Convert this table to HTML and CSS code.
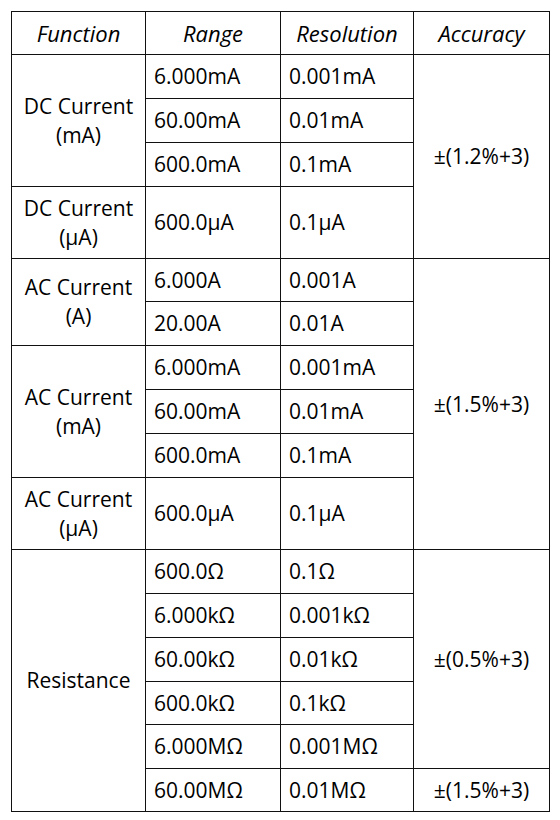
FILE: index.html
```html
<!DOCTYPE html>
<html lang="en">
<head>
    <meta charset="UTF-8">
    <title>Specifications</title>
    <link rel="stylesheet" href="styles.css">
</head>
<body>

    <table class="spec-table">
        <colgroup>
            <col class="col-func">
            <col class="col-range">
            <col class="col-res">
            <col class="col-acc">
        </colgroup>
        <thead>
            <tr class="row-head">
                <th>Function</th>
                <th>Range</th>
                <th>Resolution</th>
                <th>Accuracy</th>
            </tr>
        </thead>
        <tbody>
            <!-- DC current -->
            <tr>
                <td class="func" rowspan="3">DC Current<br>(mA)</td>
                <td class="val">6.000mA</td>
                <td class="val">0.001mA</td>
                <td class="acc" rowspan="4">±(1.2%+3)</td>
            </tr>
            <tr>
                <td class="val">60.00mA</td>
                <td class="val">0.01mA</td>
            </tr>
            <tr>
                <td class="val">600.0mA</td>
                <td class="val">0.1mA</td>
            </tr>
            <tr class="row-tall">
                <td class="func">DC Current<br>(μA)</td>
                <td class="val">600.0μA</td>
                <td class="val">0.1μA</td>
            </tr>

            <!-- AC current -->
            <tr class="row-short">
                <td class="func" rowspan="2">AC Current<br>(A)</td>
                <td class="val">6.000A</td>
                <td class="val">0.001A</td>
                <td class="acc" rowspan="6">±(1.5%+3)</td>
            </tr>
            <tr>
                <td class="val">20.00A</td>
                <td class="val">0.01A</td>
            </tr>
            <tr>
                <td class="func" rowspan="3">AC Current<br>(mA)</td>
                <td class="val">6.000mA</td>
                <td class="val">0.001mA</td>
            </tr>
            <tr>
                <td class="val">60.00mA</td>
                <td class="val">0.01mA</td>
            </tr>
            <tr>
                <td class="val">600.0mA</td>
                <td class="val">0.1mA</td>
            </tr>
            <tr class="row-tall">
                <td class="func">AC Current<br>(μA)</td>
                <td class="val">600.0μA</td>
                <td class="val">0.1μA</td>
            </tr>

            <!-- Resistance -->
            <tr>
                <td class="func" rowspan="6">Resistance</td>
                <td class="val">600.0Ω</td>
                <td class="val">0.1Ω</td>
                <td class="acc" rowspan="5">±(0.5%+3)</td>
            </tr>
            <tr>
                <td class="val">6.000kΩ</td>
                <td class="val">0.001kΩ</td>
            </tr>
            <tr>
                <td class="val">60.00kΩ</td>
                <td class="val">0.01kΩ</td>
            </tr>
            <tr class="row-short">
                <td class="val">600.0kΩ</td>
                <td class="val">0.1kΩ</td>
            </tr>
            <tr>
                <td class="val">6.000MΩ</td>
                <td class="val">0.001MΩ</td>
            </tr>
            <tr class="row-short">
                <td class="val">60.00MΩ</td>
                <td class="val">0.01MΩ</td>
                <td class="acc">±(1.5%+3)</td>
            </tr>
        </tbody>
    </table>

</body>
</html>
```

FILE: styles.css
```css
body {
    margin: 0;
    padding: 11px 0 0 11px;
    background-color: #ffffff;
    font-family: "Open Sans", "Liberation Sans", sans-serif;
    color: #000;
}
/* table frame */
.spec-table {
    border-collapse: collapse;
    table-layout: fixed;
    width: 538px;
    font-size: 21px;
}
.col-func { width: 134px; }
.col-range { width: 135px; }
.col-res { width: 133px; }
.col-acc { width: 136px; }

.spec-table th,
.spec-table td {
    border: 1px solid #111;
    padding: 0;
    line-height: 29px;
    vertical-align: middle;
}
.spec-table tr {
    height: 44px;
}
.spec-table .row-head {
    height: 43px;
}
.spec-table .row-short {
    height: 43px;
}
.spec-table .row-tall {
    height: 72px;
}
/* header */
.spec-table th {
    font-size: 22px;
    font-weight: normal;
    font-style: italic;
    text-align: center;
}
/* cells */
.func {
    text-align: center;
}
.val {
    text-align: left;
    padding-left: 8px !important;
}
.acc {
    text-align: center;
}
```
